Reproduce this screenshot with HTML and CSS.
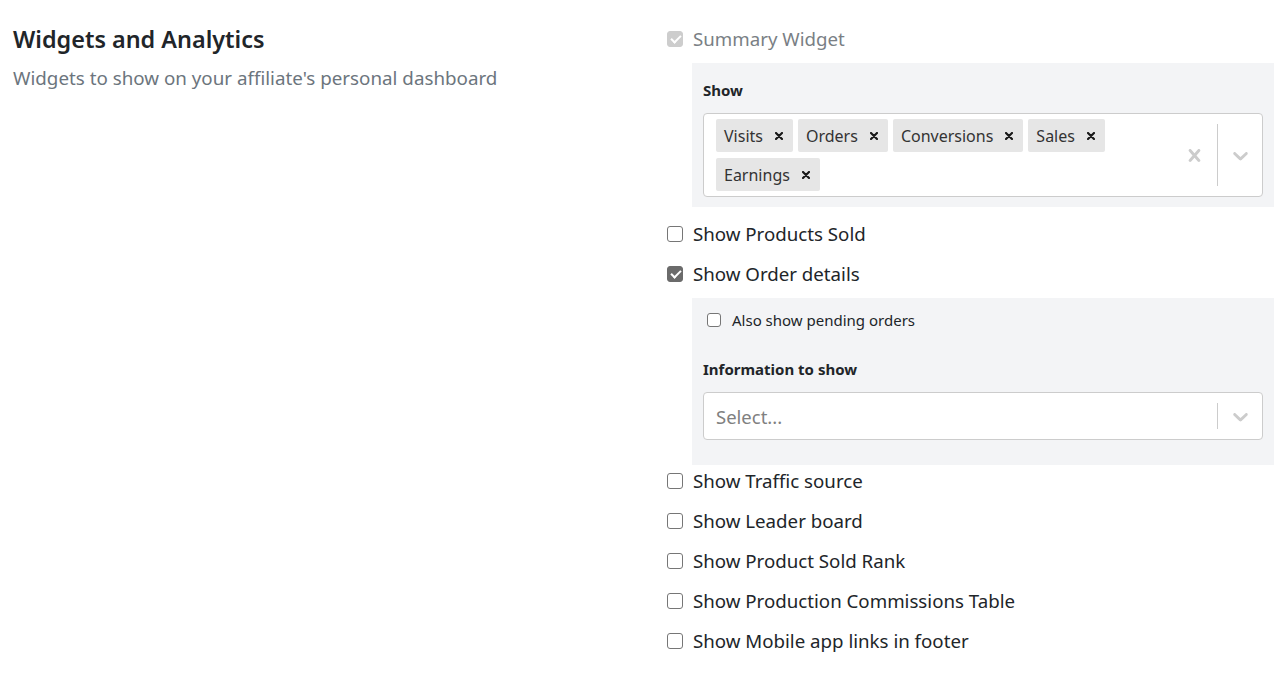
FILE: index.html
```html
<!DOCTYPE html>
<html lang="en">
<head>
<meta charset="utf-8">
<title>Widgets and Analytics</title>
<link rel="stylesheet" href="styles.css">
</head>
<body>
<div class="page">
  <section class="intro">
    <h2 class="title">Widgets and Analytics</h2>
    <p class="subtitle">Widgets to show on your affiliate's personal dashboard</p>
  </section>

  <section class="options">
    <label class="row row-first is-disabled">
      <input class="check" type="checkbox" checked disabled>
      <span class="row-text">Summary Widget</span>
    </label>

    <div class="panel panel-show">
      <div class="field-label">Show</div>
      <div class="select select-multi">
        <div class="select-values">
          <span class="tag"><span class="tag-label">Visits</span><svg class="tag-remove" width="8" height="8" viewBox="0 0 8 8"><path d="M1 1L7 7M7 1L1 7" stroke="currentColor" stroke-width="2.2" stroke-linecap="round"/></svg></span>
          <span class="tag"><span class="tag-label">Orders</span><svg class="tag-remove" width="8" height="8" viewBox="0 0 8 8"><path d="M1 1L7 7M7 1L1 7" stroke="currentColor" stroke-width="2.2" stroke-linecap="round"/></svg></span>
          <span class="tag"><span class="tag-label">Conversions</span><svg class="tag-remove" width="8" height="8" viewBox="0 0 8 8"><path d="M1 1L7 7M7 1L1 7" stroke="currentColor" stroke-width="2.2" stroke-linecap="round"/></svg></span>
          <span class="tag"><span class="tag-label">Sales</span><svg class="tag-remove" width="8" height="8" viewBox="0 0 8 8"><path d="M1 1L7 7M7 1L1 7" stroke="currentColor" stroke-width="2.2" stroke-linecap="round"/></svg></span>
          <span class="tag"><span class="tag-label">Earnings</span><svg class="tag-remove" width="8" height="8" viewBox="0 0 8 8"><path d="M1 1L7 7M7 1L1 7" stroke="currentColor" stroke-width="2.2" stroke-linecap="round"/></svg></span>
        </div>
        <div class="select-indicators">
          <span class="indicator indicator-clear">
            <svg width="25" height="25" viewBox="0 0 20 20"><path fill="currentColor" d="M14.348 14.849c-0.469 0.469-1.229 0.469-1.697 0l-2.651-3.030-2.651 3.029c-0.469 0.469-1.229 0.469-1.697 0-0.469-0.469-0.469-1.229 0-1.697l2.758-3.15-2.759-3.152c-0.469-0.469-0.469-1.228 0-1.697s1.228-0.469 1.697 0l2.652 3.031 2.651-3.031c0.469-0.469 1.228-0.469 1.697 0s0.469 1.229 0 1.697l-2.758 3.152 2.758 3.150c0.469 0.469 0.469 1.229 0 1.698z"/></svg>
          </span>
          <span class="separator"></span>
          <span class="indicator">
            <svg width="25" height="25" viewBox="0 0 20 20"><path fill="currentColor" d="M4.516 7.548c0.436-0.446 1.043-0.481 1.576 0l3.908 3.747 3.908-3.747c0.533-0.481 1.141-0.446 1.574 0 0.436 0.445 0.408 1.197 0 1.615-0.406 0.418-4.695 4.502-4.695 4.502-0.217 0.223-0.502 0.335-0.787 0.335s-0.57-0.112-0.789-0.335c0 0-4.287-4.084-4.695-4.502s-0.436-1.170 0-1.615z"/></svg>
          </span>
        </div>
      </div>
    </div>

    <label class="row row-after-panel">
      <input class="check" type="checkbox">
      <span class="row-text">Show Products Sold</span>
    </label>
    <label class="row">
      <input class="check" type="checkbox" checked>
      <span class="row-text">Show Order details</span>
    </label>

    <div class="panel panel-orders">
      <label class="subrow">
        <input class="check check-small" type="checkbox">
        <span class="subrow-text">Also show pending orders</span>
      </label>
      <div class="field-label field-label-info">Information to show</div>
      <div class="select select-single">
        <div class="select-placeholder">Select...</div>
        <div class="select-indicators">
          <span class="separator"></span>
          <span class="indicator">
            <svg width="25" height="25" viewBox="0 0 20 20"><path fill="currentColor" d="M4.516 7.548c0.436-0.446 1.043-0.481 1.576 0l3.908 3.747 3.908-3.747c0.533-0.481 1.141-0.446 1.574 0 0.436 0.445 0.408 1.197 0 1.615-0.406 0.418-4.695 4.502-4.695 4.502-0.217 0.223-0.502 0.335-0.787 0.335s-0.57-0.112-0.789-0.335c0 0-4.287-4.084-4.695-4.502s-0.436-1.170 0-1.615z"/></svg>
          </span>
        </div>
      </div>
    </div>

    <label class="row row-tight">
      <input class="check" type="checkbox">
      <span class="row-text">Show Traffic source</span>
    </label>
    <label class="row">
      <input class="check" type="checkbox">
      <span class="row-text">Show Leader board</span>
    </label>
    <label class="row">
      <input class="check" type="checkbox">
      <span class="row-text">Show Product Sold Rank</span>
    </label>
    <label class="row">
      <input class="check" type="checkbox">
      <span class="row-text">Show Production Commissions Table</span>
    </label>
    <label class="row">
      <input class="check" type="checkbox">
      <span class="row-text">Show Mobile app links in footer</span>
    </label>
  </section>
</div>
</body>
</html>
```

FILE: styles.css
```css
* {
  box-sizing: border-box;
}

body {
  margin: 0;
  background: #ffffff;
  font-family: "Noto Sans", "Open Sans", sans-serif;
  color: #212529;
}

.page {
  display: grid;
  grid-template-columns: 654px 607px;
  padding: 0 12px 0 13px;
}

.intro {
  padding-top: 23px;
}

.title {
  margin: 0;
  font-size: 23.4px;
  line-height: 32px;
  font-weight: 600;
  color: #212529;
}

.subtitle {
  margin: 10px 0 0;
  font-size: 18.8px;
  line-height: 27px;
  color: #6c757d;
}

.options {
  display: flex;
  flex-direction: column;
  padding-top: 25px;
}

.row {
  display: flex;
  align-items: center;
  gap: 10px;
  height: 27px;
  margin-top: 13px;
  font-size: 18.7px;
  line-height: 27px;
  cursor: pointer;
}

.row-first {
  margin-top: 0;
}

.row-after-panel {
  margin-top: 13px;
}

.row-tight {
  margin-top: 2px;
}

.is-disabled .row-text {
  color: #7a7f85;
}

.check {
  appearance: none;
  -webkit-appearance: none;
  margin: 0;
  flex: none;
  width: 16px;
  height: 16px;
  border: 1px solid #767676;
  border-radius: 3px;
  background: #ffffff;
  position: relative;
}

.check:checked {
  background: #6b6b6b;
  border-color: #6b6b6b;
}

.check:checked::after {
  content: "";
  position: absolute;
  left: 4.5px;
  top: 1.5px;
  width: 4px;
  height: 8px;
  border: solid #ffffff;
  border-width: 0 2.5px 2.5px 0;
  transform: rotate(45deg);
}

.check:disabled:checked {
  background: #cdcdcd;
  border-color: #cdcdcd;
}

.check-small {
  width: 14px;
  height: 14px;
}

.panel {
  background: #f3f4f6;
  margin-left: 25px;
  padding: 0 11px;
}

.panel-show {
  margin-top: 11px;
  height: 144px;
  padding-top: 16px;
}

.panel-orders {
  margin-top: 11px;
  height: 167px;
  padding-top: 14px;
}

.field-label {
  font-size: 15px;
  line-height: 22px;
  font-weight: 700;
  color: #212529;
  margin-bottom: 12px;
}

.field-label-info {
  margin-top: 30px;
  margin-bottom: 12px;
}

.subrow {
  display: flex;
  align-items: center;
  gap: 11px;
  padding-left: 4px;
  height: 16px;
  font-size: 15px;
  line-height: 22px;
  cursor: pointer;
}

.select {
  display: flex;
  align-items: stretch;
  background: #ffffff;
  border: 1px solid #cccccc;
  border-radius: 4px;
}

.select-multi {
  height: 84px;
}

.select-single {
  height: 48px;
}

.select-values {
  flex: 1;
  display: flex;
  flex-wrap: wrap;
  align-content: flex-start;
  gap: 6px 5px;
  padding: 5px 12px;
}

.tag {
  display: inline-flex;
  align-items: center;
  height: 33px;
  background: #e6e6e6;
  border-radius: 2px;
  color: #333333;
  font-size: 16px;
}

.tag-label {
  padding: 0 12px 0 8px;
}

.tag-remove {
  display: block;
  color: #1a1a1a;
  margin-right: 10px;
}

.select-placeholder {
  flex: 1;
  display: flex;
  align-items: center;
  padding-left: 12px;
  font-size: 18.5px;
  color: #808080;
}

.select-indicators {
  display: flex;
  align-items: center;
}

.indicator {
  display: flex;
  align-items: center;
  justify-content: center;
  width: 44px;
  color: #cccccc;
}

.indicator-clear {
  width: 46px;
}

.separator {
  align-self: stretch;
  width: 1px;
  background: #cccccc;
  margin: 10px 0;
}
```
